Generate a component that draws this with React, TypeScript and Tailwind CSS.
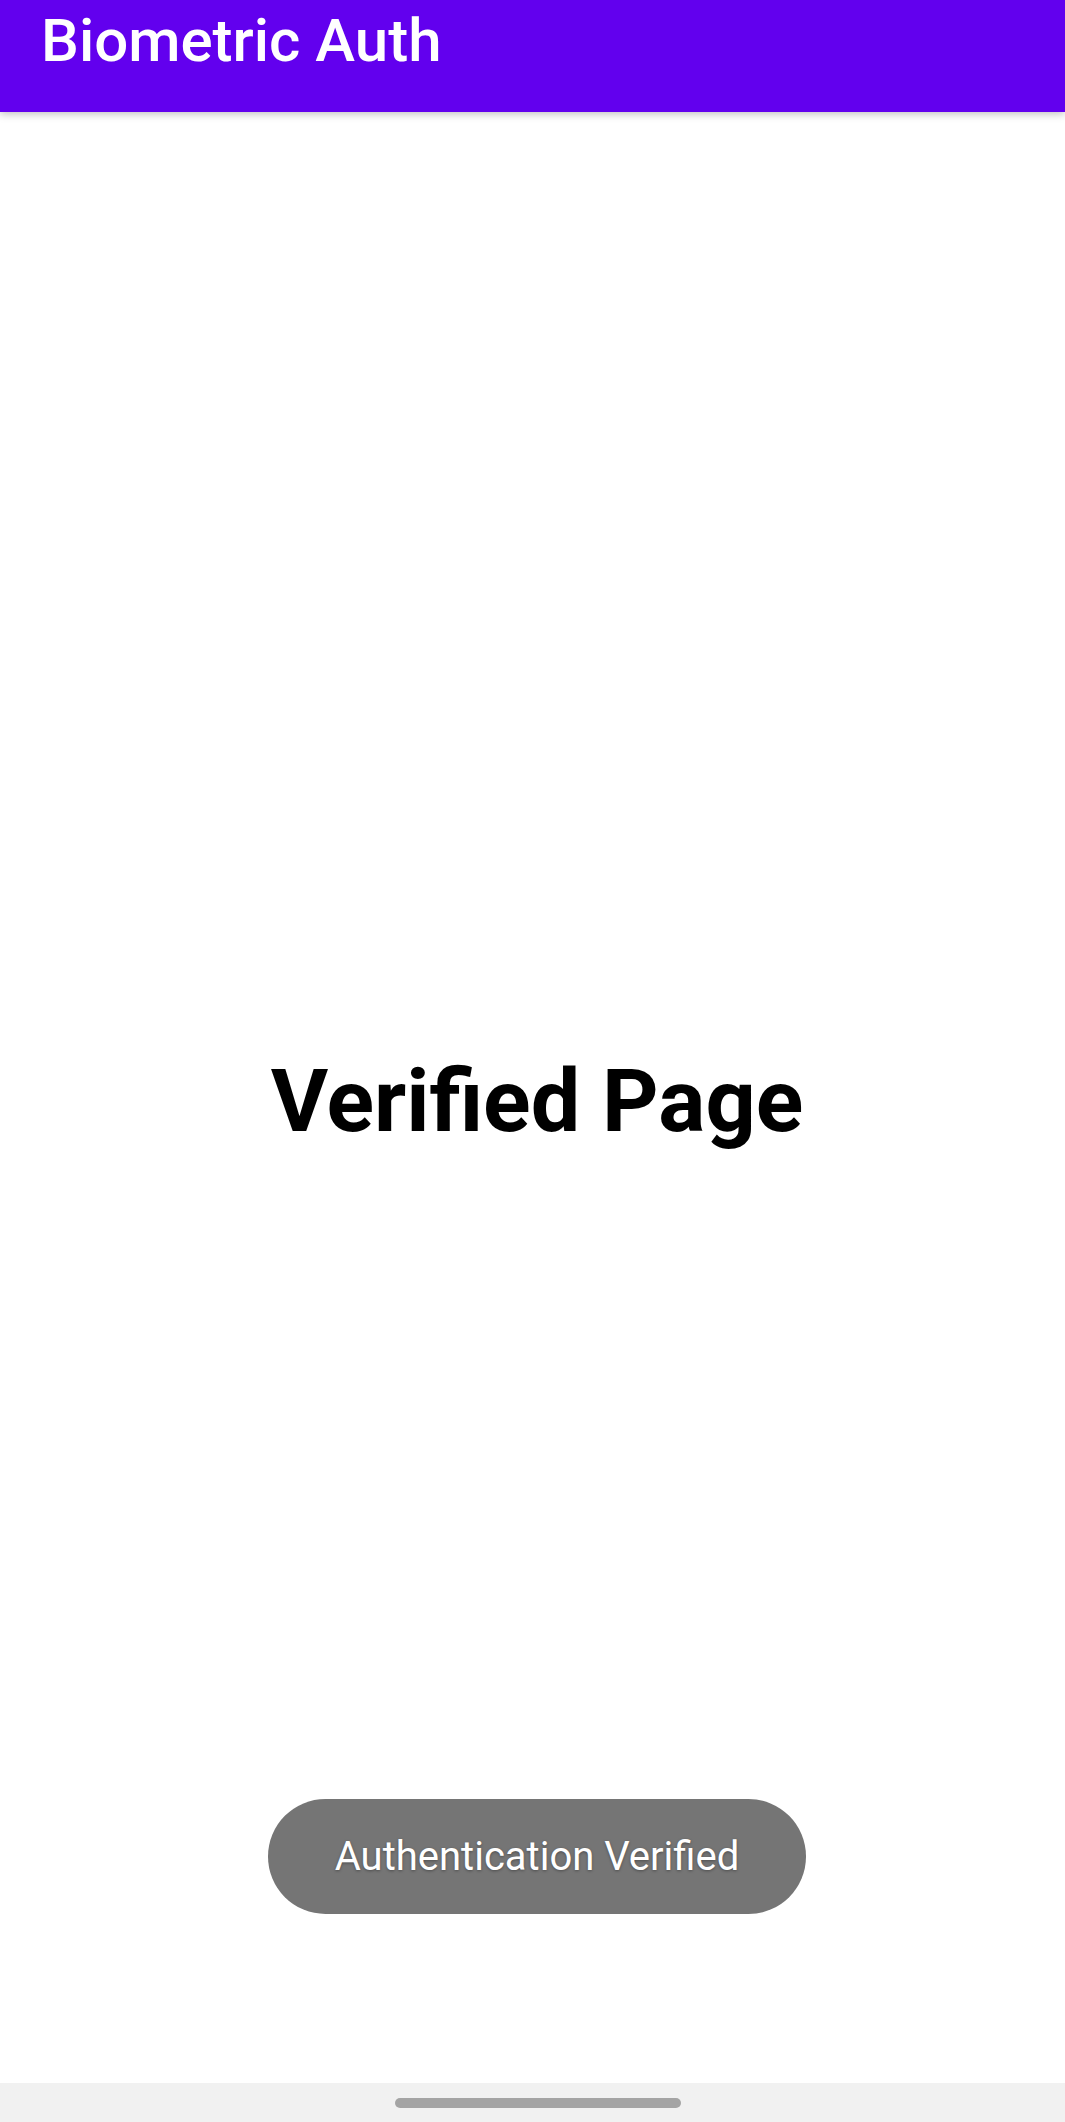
import React from "react"

export default function App() {
  return (
    <div
      className="relative flex h-[2122px] w-full flex-col overflow-hidden bg-white"
      style={{ fontFamily: "Roboto, 'Noto Sans', sans-serif" }}
    >
      {/* App bar */}
      <header className="relative z-10 h-[112px] shrink-0 bg-[#6200ee] shadow-[0_2px_8px_rgba(0,0,0,0.25)]">
        <h1 className="pl-[41px] pt-[11px] text-[60px] font-medium leading-none text-white">Biometric Auth</h1>
      </header>

      {/* Content */}
      <main className="flex flex-1 items-center justify-center pl-[9px] pt-[6px]">
        <h2 className="text-[88px] font-bold leading-none text-black">Verified Page</h2>
      </main>

      {/* Navigation bar */}
      <div className="flex h-[39px] shrink-0 items-center justify-center bg-[#f1f1f1] pl-[11px]">
        <div className="h-[10px] w-[286px] rounded-full bg-[#a4a4a4]" />
      </div>

      {/* Toast */}
      <div className="absolute left-[268px] top-[1799px] flex h-[115px] w-[538px] items-center justify-center rounded-full bg-[#757575]">
        <span className="text-[40px] leading-none text-white [text-shadow:0_1px_3px_rgba(0,0,0,0.35)]">
          Authentication Verified
        </span>
      </div>
    </div>
  )
}
